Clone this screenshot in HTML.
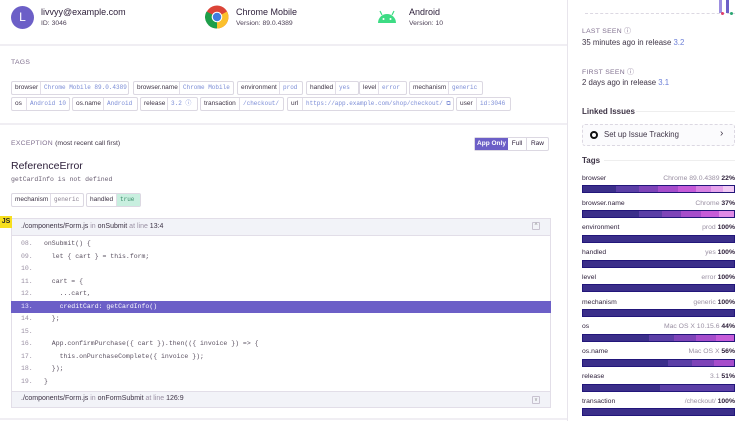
<!DOCTYPE html>
<html><head><meta charset="utf-8"><style>
*{box-sizing:border-box;margin:0;padding:0}
body{width:750px;height:421px;overflow:hidden;background:#fff;font-family:"Liberation Sans",sans-serif;color:#2b1d38;position:relative}
.a{position:absolute;white-space:nowrap}
.mono{font-family:"Liberation Mono",monospace}
.tag{position:absolute;height:14px;border:1px solid #dcd8e2;border-radius:2px;display:flex;font-size:6.5px;line-height:12px;background:#fff}
.tag span{display:block;padding:0 3px;white-space:nowrap}
.tag .k{color:#3e3446;border-right:1px solid #e2dee8}
.tag .v{color:#7b8cd6;font-family:"Liberation Mono",monospace;font-size:6px}
.hr{position:absolute;left:0;width:567px;height:2px;background:#f0eef3}
.lbl{font-size:6.8px;color:#80708f;letter-spacing:.3px}
.code{position:absolute;left:11px;width:540px;height:12.5px;font-size:6.5px;line-height:12.5px;color:#5a5060;font-family:"Liberation Mono",monospace}
.code b{font-weight:normal;position:absolute;left:10px;color:#9a90a3}
.code i{font-style:normal;position:absolute;left:33px;white-space:pre}
.tn{position:absolute;left:582px;width:153px;font-size:6.8px;color:#2b1d38}
.tn .r{position:absolute;right:0;color:#9a90a3}
.tn .r em{font-style:normal;color:#2b1d38;font-weight:bold}
.bar{position:absolute;left:582px;width:153px;height:8px;display:flex;border:1px solid #22167a;background:#3b2f8a}
.bar div{height:100%}
</style></head><body>
<!-- header -->
<div class="a" style="left:11px;top:6px;width:23px;height:23px;border-radius:50%;background:#6c5fc7;color:#fff;font-size:12px;text-align:center;line-height:23px">L</div>
<div class="a" style="left:41px;top:7px;font-size:9px">livvyy@example.com</div>
<div class="a" style="left:41px;top:20px;font-size:6.8px;color:#4e4257">ID: 3046</div>
<svg class="a" style="left:205px;top:5px" width="24" height="24" viewBox="0 0 24 24"><circle cx="12" cy="12" r="11.5" fill="#db4437"/><path d="M12 12 L22 6.5 A11.5 11.5 0 0 1 12 23.5Z" fill="#fbc02d"/><path d="M12 12 L12 23.5 A11.5 11.5 0 0 1 1.5 6.5Z" fill="#1e9e4a"/><circle cx="12" cy="12" r="5.3" fill="#fff"/><circle cx="12" cy="12" r="4.2" fill="#3f7de0"/></svg>
<div class="a" style="left:236px;top:7px;font-size:9px">Chrome Mobile</div>
<div class="a" style="left:236px;top:20px;font-size:6.8px;color:#4e4257">Version: 89.0.4389</div>
<svg class="a" style="left:377px;top:9px" width="20" height="16" viewBox="0 0 20 16"><path d="M1 14 A9 9 0 0 1 19 14Z" fill="#3ddc84"/><line x1="5" y1="6" x2="3" y2="2" stroke="#3ddc84" stroke-width="1.2"/><line x1="15" y1="6" x2="17" y2="2" stroke="#3ddc84" stroke-width="1.2"/><circle cx="6.5" cy="10" r="1" fill="#fff"/><circle cx="13.5" cy="10" r="1" fill="#fff"/></svg>
<div class="a" style="left:409px;top:7px;font-size:9px">Android</div>
<div class="a" style="left:409px;top:20px;font-size:6.8px;color:#4e4257">Version: 10</div>
<div class="hr" style="top:44px"></div>
<!-- tags -->
<div class="a lbl" style="left:11px;top:59px">TAGS</div>
<div class="tag" style="left:11px;top:81px"><span class="k" style="width:29px">browser</span><span class="v" style="width:87px">Chrome Mobile 89.0.4389</span></div>
<div class="tag" style="left:133px;top:81px"><span class="k" style="width:46px">browser.name</span><span class="v" style="width:53px">Chrome Mobile</span></div>
<div class="tag" style="left:237px;top:81px"><span class="k" style="width:42px">environment</span><span class="v" style="width:22px">prod</span></div>
<div class="tag" style="left:306px;top:81px"><span class="k" style="width:29px">handled</span><span class="v" style="width:22px">yes</span></div>
<div class="tag" style="left:359px;top:81px"><span class="k" style="width:19px">level</span><span class="v" style="width:27px">error</span></div>
<div class="tag" style="left:409px;top:81px"><span class="k" style="width:39px">mechanism</span><span class="v" style="width:33px">generic</span></div>
<div class="tag" style="left:11px;top:97px"><span class="k" style="width:15px">os</span><span class="v" style="width:42px">Android 10</span></div>
<div class="tag" style="left:72px;top:97px"><span class="k" style="width:31px">os.name</span><span class="v" style="width:33px">Android</span></div>
<div class="tag" style="left:140px;top:97px"><span class="k" style="width:27px">release</span><span class="v" style="width:29px">3.2 ⓘ</span></div>
<div class="tag" style="left:200px;top:97px"><span class="k" style="width:39px">transaction</span><span class="v" style="width:43px">/checkout/</span></div>
<div class="tag" style="left:287px;top:97px"><span class="k" style="width:15px">url</span><span class="v" style="width:150px">https://app.example.com/shop/checkout/ ⧉</span></div>
<div class="tag" style="left:456px;top:97px"><span class="k" style="width:20px">user</span><span class="v" style="width:33px">id:3046</span></div>
<div class="hr" style="top:123px"></div>
<!-- exception -->
<div class="a lbl" style="left:11px;top:140px">EXCEPTION <span style="color:#3e3446;letter-spacing:0">(most recent call first)</span></div>
<div class="a" style="left:474px;top:137px;height:14px;display:flex;font-size:6.5px;line-height:12px;border:1px solid #dcd8e2;border-radius:2px">
<span style="background:#6c5fc7;color:#fff;width:33px;text-align:center;font-weight:bold">App Only</span><span style="width:19px;text-align:center;border-right:1px solid #dcd8e2">Full</span><span style="width:21px;text-align:center">Raw</span></div>
<div class="a" style="left:11px;top:160px;font-size:10.5px">ReferenceError</div>
<div class="a mono" style="left:11px;top:176px;font-size:6.5px;color:#6a5f73">getCardInfo is not defined</div>
<div class="tag" style="left:11px;top:193px"><span class="k" style="width:39px">mechanism</span><span class="v" style="width:32px;color:#8a8090">generic</span></div>
<div class="tag" style="left:86px;top:193px"><span class="k" style="width:30px">handled</span><span class="v" style="width:23px;background:#c8efdf;color:#3c8f6c">true</span></div>
<!-- frame -->
<div class="a" style="left:11px;top:218px;width:540px;height:190px;border:1px solid #e2dee8;background:#fff"></div>
<div class="a" style="left:12px;top:219px;width:538px;height:17px;background:#f2f3f8;border-bottom:1px solid #e2dee8"></div>
<div class="a" style="left:0;top:216px;width:12px;height:12px;background:#f7df1e;font-size:7px;font-weight:bold;line-height:12px;text-align:center;color:#222">JS</div>
<div class="a" style="left:21px;top:223px;font-size:7px;color:#3e3446">./components/Form.js <span style="color:#9a90a3">in</span> onSubmit <span style="color:#9a90a3">at line</span> 13:4</div>
<div class="a" style="left:532px;top:222px;width:8px;height:8px;border:1px solid #c8c2d0;border-radius:1px;font-size:6px;line-height:6px;text-align:center;color:#888">^</div>
<div class="code" style="top:238px"><b>08.</b><i>onSubmit() {</i></div>
<div class="code" style="top:250.5px"><b>09.</b><i>  let { cart } = this.form;</i></div>
<div class="code" style="top:263px"><b>10.</b><i></i></div>
<div class="code" style="top:275.5px"><b>11.</b><i>  cart = {</i></div>
<div class="code" style="top:288px"><b>12.</b><i>    ...cart,</i></div>
<div class="code" style="top:300.5px;background:#6c5fc7;color:#fff"><b style="color:#e8e4ff">13.</b><i>    creditCard: getCardInfo()</i></div>
<div class="code" style="top:313px"><b>14.</b><i>  };</i></div>
<div class="code" style="top:325.5px"><b>15.</b><i></i></div>
<div class="code" style="top:338px"><b>16.</b><i>  App.confirmPurchase({ cart }).then(({ invoice }) =&gt; {</i></div>
<div class="code" style="top:350.5px"><b>17.</b><i>    this.onPurchaseComplete({ invoice });</i></div>
<div class="code" style="top:363px"><b>18.</b><i>  });</i></div>
<div class="code" style="top:375.5px"><b>19.</b><i>}</i></div>
<div class="a" style="left:12px;top:391px;width:538px;height:16px;background:#f2f3f8;border-top:1px solid #e2dee8"></div>
<div class="a" style="left:21px;top:395px;font-size:7px;color:#3e3446">./components/Form.js <span style="color:#9a90a3">in</span> onFormSubmit <span style="color:#9a90a3">at line</span> 126:9</div>
<div class="a" style="left:532px;top:396px;width:8px;height:8px;border:1px solid #c8c2d0;border-radius:1px;font-size:5px;line-height:6px;text-align:center;color:#888">v</div>
<div class="hr" style="top:418px"></div>
<!-- sidebar -->
<div class="a" style="left:567px;top:0;width:1px;height:421px;background:#e8e5ec"></div>
<div class="a" style="left:585px;top:13px;width:150px;border-top:1px dashed #dcd8e2"></div>
<div class="a" style="left:719px;top:0;width:3px;height:13px;background:#9d8fe0"></div>
<div class="a" style="left:726px;top:0;width:3px;height:13px;background:#6c5fc7"></div>
<div class="a" style="left:721px;top:12px;width:3px;height:3px;border-radius:50%;background:#e03e6a"></div>
<div class="a" style="left:730px;top:12px;width:3px;height:3px;border-radius:50%;background:#2ba672"></div>
<div class="a lbl" style="left:582px;top:25px">LAST SEEN ⓘ</div>
<div class="a" style="left:582px;top:38px;font-size:7.8px;color:#3e3446">35 minutes ago in release <span style="color:#6c7fd8">3.2</span></div>
<div class="a lbl" style="left:582px;top:66px">FIRST SEEN ⓘ</div>
<div class="a" style="left:582px;top:78px;font-size:7.8px;color:#3e3446">2 days ago in release <span style="color:#6c7fd8">3.1</span></div>
<div class="a" style="left:582px;top:107px;font-size:8px;font-weight:bold;color:#3e3446">Linked Issues</div>
<div class="a" style="left:636px;top:111px;width:99px;height:1px;background:#eee"></div>
<div class="a" style="left:582px;top:124px;width:153px;height:22px;border:1px dashed #dcd8e2;border-radius:3px;background:#fbfbfd"></div>
<div class="a" style="left:590px;top:131px;width:8px;height:8px;border:2px solid #111;border-radius:50%"></div>
<div class="a" style="left:604px;top:130px;font-size:7.8px;color:#3e3446">Set up Issue Tracking</div>
<div class="a" style="left:720px;top:128px;font-size:10px;color:#3e3446">›</div>
<div class="a" style="left:582px;top:156px;font-size:8px;font-weight:bold;color:#3e3446">Tags</div>
<div class="a" style="left:604px;top:160px;width:131px;height:1px;background:#eee"></div>

<div class="tn" style="top:175px">browser<span class="r">Chrome 89.0.4389 <em>22%</em></span></div>
<div class="bar" style="top:185px"><div style="width:22%;background:#3b2f8a"></div><div style="width:15%;background:#5b3fa6"></div><div style="width:13%;background:#7e44b8"></div><div style="width:13%;background:#a64dcb"></div><div style="width:12%;background:#c65bd8"></div><div style="width:10%;background:#d882e2"></div><div style="width:8%;background:#e6a4ec"></div><div style="width:7%;background:#f1caf3"></div></div>
<div class="tn" style="top:200px">browser.name<span class="r">Chrome <em>37%</em></span></div>
<div class="bar" style="top:210px"><div style="width:37%;background:#3b2f8a"></div><div style="width:15%;background:#5b3fa6"></div><div style="width:13%;background:#7e44b8"></div><div style="width:13%;background:#a64dcb"></div><div style="width:12%;background:#c65bd8"></div><div style="width:10%;background:#e08ae6"></div></div>
<div class="tn" style="top:224px">environment<span class="r">prod <em>100%</em></span></div>
<div class="bar" style="top:235px"></div>
<div class="tn" style="top:249px">handled<span class="r">yes <em>100%</em></span></div>
<div class="bar" style="top:260px"></div>
<div class="tn" style="top:274px">level<span class="r">error <em>100%</em></span></div>
<div class="bar" style="top:284px"></div>
<div class="tn" style="top:299px">mechanism<span class="r">generic <em>100%</em></span></div>
<div class="bar" style="top:309px"></div>
<div class="tn" style="top:323px">os<span class="r">Mac OS X 10.15.6 <em>44%</em></span></div>
<div class="bar" style="top:334px"><div style="width:44%;background:#3b2f8a"></div><div style="width:16%;background:#5b3fa6"></div><div style="width:15%;background:#7e44b8"></div><div style="width:13%;background:#a64dcb"></div><div style="width:12%;background:#c65bd8"></div></div>
<div class="tn" style="top:348px">os.name<span class="r">Mac OS X <em>56%</em></span></div>
<div class="bar" style="top:359px"><div style="width:56%;background:#3b2f8a"></div><div style="width:16%;background:#5b3fa6"></div><div style="width:15%;background:#7e44b8"></div><div style="width:13%;background:#a64dcb"></div></div>
<div class="tn" style="top:373px">release<span class="r">3.1 <em>51%</em></span></div>
<div class="bar" style="top:384px"><div style="width:51%;background:#3b2f8a"></div><div style="width:49%;background:#5b3fa6"></div></div>
<div class="tn" style="top:398px">transaction<span class="r">/checkout/ <em>100%</em></span></div>
<div class="bar" style="top:408px"></div>
</body></html>
